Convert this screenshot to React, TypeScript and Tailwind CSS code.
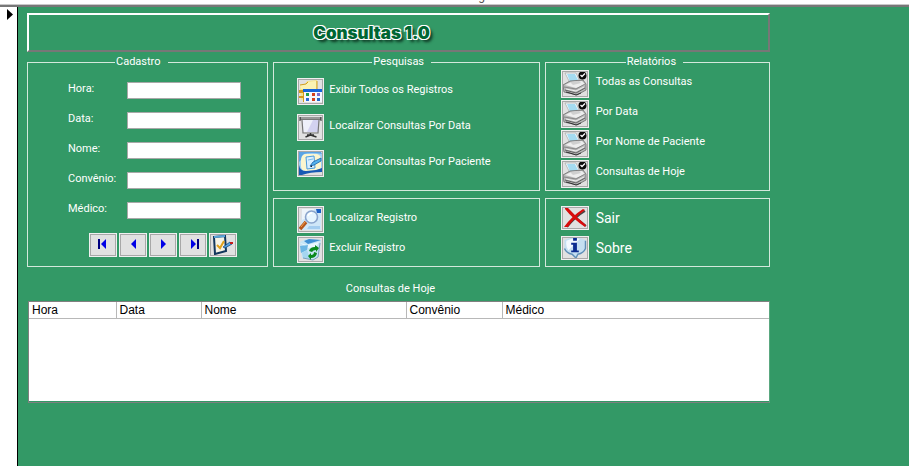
import type { ReactNode } from 'react';

const face =
  'flex shrink-0 items-center justify-center overflow-hidden border border-[#f0f0f0] bg-[#e1e1e1] p-px shadow-[inset_0_0_0_1px_#a8a8a8]';

const sizes = {
  square: 'h-[27px] w-[27px]',
  print: 'h-[28px] w-[28px]',
  wide: 'h-[24px] w-[28px]',
};

function FolderIcon() {
  return (
    <svg viewBox="0 0 23 23" className="h-full w-full" aria-hidden="true">
      <path d="M1 5l5-1 2-3 10-1v10l-12 9-4 1z" fill="#f4e48a" />
      <path d="M1 5l6-1 2-2 8-1v8H2z" fill="#fbf3b4" />
      <path d="M18 1v8M1 5l6-1 2-2" stroke="#cf9d22" fill="none" />
      <path d="M0 10h5v3H0zM0 16h4v2H0z" fill="#d39a1e" />
      <rect x="4" y="9" width="19" height="13" fill="#f4f7ff" />
      <path d="M4 9h19v3H4z" fill="#1464dc" />
      <path d="M4.500 12v10" stroke="#d39a1e" />
      <path d="M7 13h3v3H7z" fill="#22a04a" />
      <path d="M13 13h3v3h-3z" fill="#d2401e" />
      <path d="M18 13h3v3h-3z" fill="#7a6ad0" />
      <path d="M7 18h3v3H7z" fill="#2a6ad8" />
      <path d="M13 18h3v3h-3z" fill="#d2401e" />
      <path d="M18 18h3v3h-3z" fill="#2268c8" />
    </svg>
  );
}

function ScreenIcon() {
  return (
    <svg viewBox="0 0 23 23" className="h-full w-full" aria-hidden="true">
      <path d="M3 4h17v12H3z" fill="#eef0fa" />
      <path d="M14 4h6v12H8z" fill="#d3d2f0" />
      <path d="M3 4l1 13h15l1-13" fill="none" stroke="#777" strokeWidth="1.200" />
      <path d="M1 1h21v3H1z" fill="#777" />
      <path d="M2 2h19" stroke="#bbb" />
      <path d="M1 1v4M22 1v4" stroke="#333" />
      <path d="M11.500 17v2l-5 2M11.500 19l6 2M8 19h7" fill="none" stroke="#333" strokeWidth="1.500" />
    </svg>
  );
}

function PatientIcon() {
  return (
    <svg viewBox="0 0 23 23" className="h-full w-full" aria-hidden="true">
      <path d="M0 2q11-4 23 0v17q-12 0-21 3L0 22z" fill="#9fd0f4" />
      <path d="M2 6q1-4 5-4h11q4 1 4 5v8q0 4-5 4H7q-5 0-5-5z" fill="#fbf6cf" />
      <path d="M0 0h22l1 2Q12 0 5 2 2 4 2 8L0 10z" fill="#5aa4e4" />
      <path d="M0 13q1 6 7 6l10-1 6-2v4q-12 0-20 3H0z" fill="#1759b4" />
      <path d="M7 5l8-1 1 12-8 1z" fill="#d8efff" stroke="#4a9cdc" />
      <path d="M9 8l5-1" stroke="#7fbde8" />
      <path d="M22 6l-8 4-3 4 4-1 7-4z" fill="#55b4ee" stroke="#165fa8" strokeWidth=".8" />
      <path d="M11 15l2-2v2z" fill="#112233" />
    </svg>
  );
}

function PrinterIcon() {
  return (
    <svg viewBox="0 0 24 24" className="h-full w-full" aria-hidden="true">
      <path d="M2 1h11l4 9-10 1z" fill="#f4fcff" stroke="#999" strokeWidth=".6" />
      <path d="M4 2h8l3 6-8 2z" fill="#a5dcf2" />
      <path d="M0 13l7-4 13-1 3 4v6l-9 5-13-3z" fill="#b9b9b9" stroke="#6a6a6a" strokeWidth=".8" />
      <path d="M2 13l6-3 11-1 3 3-9 4z" fill="#ededed" />
      <path d="M7 10l9-1 2 2-8 2z" fill="#cfcfcf" />
      <path d="M1 15l12 2 9-5" fill="none" stroke="#7a7a7a" strokeWidth=".8" />
      <path d="M3 17l10 2 8-4" fill="none" stroke="#f0f0f0" />
      <path d="M2 18l11 3 9-5" fill="none" stroke="#4a4a4a" strokeWidth=".8" />
      <path d="M3 20l4 1 6 2 5-2" fill="none" stroke="#333" />
      <circle cx="19.500" cy="3.500" r="4" fill="#0a0a0a" />
      <path d="M17.500 3l1.500 1.500 3-3" fill="none" stroke="#fff" strokeWidth="1.300" />
    </svg>
  );
}

function SearchIcon() {
  return (
    <svg viewBox="0 0 23 23" className="h-full w-full" aria-hidden="true">
      <path d="M3 1h19v21H2z" fill="#cfe6f8" />
      <path d="M3 1h12v5L3 12z" fill="#eef5fb" />
      <path d="M10 18h11v3H8z" fill="#a4cdf0" />
      <path d="M17 1h5v4h-4z" fill="#1a5fc4" />
      <path d="M1 21l6-7" stroke="#b5561c" strokeWidth="3.500" />
      <path d="M2 19l4-5" stroke="#f0a04c" />
      <circle cx="12.500" cy="9" r="6" fill="#e6f5ff" stroke="#8aa4cc" strokeWidth="1.600" />
      <path d="M9 8q1-3 4-3" fill="none" stroke="#fff" strokeWidth="1.500" />
    </svg>
  );
}

function RecycleIcon() {
  return (
    <svg viewBox="0 0 23 23" className="h-full w-full" aria-hidden="true">
      <path d="M1 4l6-3 15 1-2 17-6 3-11-2z" fill="#c6e5f6" />
      <path d="M5 3l4 3 13-4-12-1z" fill="#3f8fd4" />
      <path d="M1 5l7 2 12-3-3 5-8 1z" fill="#eaf7ff" />
      <path d="M1 8l8-1-1 5-6 3z" fill="#6cb6e4" />
      <path d="M3 15l5-3 3 9-7-1z" fill="#a5d6f0" />
      <path d="M21 5l-2 14-5 3-10-2" fill="none" stroke="#7aa0bc" />
      <path d="M10 13q1-4 6-4V7l4 3-3 4v-2q-3 0-4 2zM18 15q-1 5-6 5v2l-3-4 3-3v2q3 0 3-3z" fill="#0a8a1e" />
    </svg>
  );
}

function CloseIcon() {
  return (
    <svg viewBox="0 0 24 20" className="h-full w-full" aria-hidden="true">
      <path d="M4 1q9 10 19 17M22 3Q12 9 4 19" fill="none" stroke="#444" strokeWidth="2" />
      <path d="M2 0l3 0q8 9 18 17l-1 2Q9 10 2 1z" fill="#d80c0c" />
      <path d="M20 1l2 1Q11 10 5 19H1Q9 8 20 1z" fill="#d80c0c" />
    </svg>
  );
}

function InfoIcon() {
  return (
    <svg viewBox="0 0 24 21" className="h-full w-full" aria-hidden="true">
      <path d="M1 2Q12-3 23 2v9q-2 5-8 6l-2 4-4-4q-7-2-8-6z" fill="#c5dff2" />
      <path d="M3 3q8-4 14-2L5 13q-3-4-2-10z" fill="#f2f9ff" />
      <path d="M23 3v8q-2 5-8 6l-2 4-4-4q-6-1-8-6" fill="none" stroke="#5f8fb8" strokeWidth="1.500" />
      <path d="M10 0h4v3h-4zM8 5h6v8h2v2H8v-2h2V7H8z" fill="#0c2c90" />
    </svg>
  );
}

function EditIcon() {
  return (
    <svg viewBox="0 0 24 20" className="h-full w-full" aria-hidden="true">
      <path d="M3 2l11-1 1 15-11 3z" fill="#f6f3e6" stroke="#12365c" strokeWidth="2" />
      <path d="M3 2l11-1" stroke="#5aa6dc" strokeWidth="2" />
      <path d="M6 10l3 3 4-7" fill="none" stroke="#e0a11c" strokeWidth="2" />
      <path d="M12 12l7-5 2 2-7 4z" fill="#5aa6e4" stroke="#174a80" strokeWidth=".8" />
      <path d="M19 7h3v2h-3z" fill="#c41c1c" />
    </svg>
  );
}

function NavIcon({ back, edge }: { back?: boolean; edge?: boolean }) {
  return (
    <svg viewBox="0 0 24 20" className="h-full w-full" aria-hidden="true">
      {back ? <path d="M15 4v10l-5-5z" fill="#0000e6" /> : <path d="M10 4v10l5-5z" fill="#0000e6" />}
      {edge && <path d={back ? 'M7 4h2v10H7z' : 'M16 4h2v10h-2z'} fill="#000080" />}
    </svg>
  );
}

type ActionProps = {
  id: string;
  text: string;
  size: keyof typeof sizes;
  icon: ReactNode;
  large?: boolean;
};

function Action({ id, text, size, icon, large }: ActionProps) {
  return (
    <div className={`flex items-center ${size === 'square' ? 'gap-[5px]' : 'gap-[7px]'}`}>
      <button id={id} type="button" className={`${face} ${sizes[size]}`}>
        {icon}
      </button>
      <label htmlFor={id} className={large ? 'text-[14px] leading-4' : 'pb-1'}>
        {text}
      </label>
    </div>
  );
}

function Group({ title, indent, body, children }: { title: string; indent: string; body: string; children: ReactNode }) {
  return (
    <fieldset className="min-w-0 border border-[#d4e8dc]">
      <legend className={`h-[14px] pr-[7px] pl-px ${indent}`}>{title}</legend>
      <div className={`flex flex-col ${body}`}>{children}</div>
    </fieldset>
  );
}

const fields = [
  ['hora', 'Hora:'],
  ['data', 'Data:'],
  ['nome', 'Nome:'],
  ['convenio', 'Convênio:'],
  ['medico', 'Médico:'],
];

const reports = [
  ['todas', 'Todas as Consultas'],
  ['por-data', 'Por Data'],
  ['por-nome', 'Por Nome de Paciente'],
  ['hoje', 'Consultas de Hoje'],
];

const navigation = [
  { label: 'Primeiro registro', icon: <NavIcon back edge /> },
  { label: 'Registro anterior', icon: <NavIcon back /> },
  { label: 'Próximo registro', icon: <NavIcon /> },
  { label: 'Último registro', icon: <NavIcon edge /> },
  { label: 'Editar registro', icon: <EditIcon /> },
];

export default function App() {
  return (
    <div className="flex min-h-screen flex-col bg-[#339966] font-['Roboto','Liberation_Sans',sans-serif] text-[11px] leading-[14px] text-white">
      <div className="h-[7px] border-b-2 border-[#777777] bg-white">
        <div className="flex h-[5px] items-end justify-center overflow-hidden border-b border-[#c8c8c8] pl-[54px] text-[12px] leading-4 text-[#555555]">
          <span>g</span>
        </div>
      </div>
      <div className="flex flex-1">
        <div className="w-[18px] shrink-0 border-r border-black bg-white pt-[2px] pl-[7px]">
          <svg viewBox="0 0 6 11" className="h-[11px] w-[6px]" aria-hidden="true">
            <path d="M0 0l6 5.500-6 5.500z" fill="#000" />
          </svg>
        </div>
        <main className="min-w-0 flex-1 px-[9px] pt-[6px]">
          <div className="w-full max-w-[743px]">
            <header className="flex h-[39px] items-center justify-center border-2 border-t-white border-r-[#777777] border-b-[#777777] border-l-white pr-[54px]">
              <h1 className="font-['Inter',sans-serif] text-[17px] leading-5 font-black text-[#006633] [text-shadow:-1px_-1px_0_#fff,1px_-1px_0_#fff,-1px_1px_0_#fff,1px_1px_0_#fff,3px_3px_3px_#0b3320]">
                Consultas 1.0
              </h1>
            </header>

            <div className="mt-[3px] grid grid-cols-[241fr_266fr_225fr] gap-x-[5px]">
              <Group title="Cadastro" indent="ml-[87px]" body="pt-[13px] pb-[9px] pl-[40px]">
                <div className="flex flex-col gap-[13px]">
                  {fields.map(([id, text]) => (
                    <div key={id} className="flex h-[17px] items-center">
                      <label htmlFor={id} className="w-[59px] pb-1">
                        {text}
                      </label>
                      <input
                        id={id}
                        type="text"
                        className="h-[17px] w-[114px] border border-[#a8a8a8] bg-white px-1 text-black"
                      />
                    </div>
                  ))}
                </div>
                <div className="mt-[14px] flex gap-[2px] pl-[21px]">
                  {navigation.map(({ label, icon }) => (
                    <button key={label} type="button" aria-label={label} className={`${face} ${sizes.wide}`}>
                      {icon}
                    </button>
                  ))}
                </div>
              </Group>

              <div className="flex flex-col gap-[7px]">
                <Group title="Pesquisas" indent="ml-[98px]" body="gap-[9px] pt-[9px] pb-[13px] pl-[23px]">
                  <Action id="exibir" text="Exibir Todos os Registros" size="square" icon={<FolderIcon />} />
                  <Action id="localizar-data" text="Localizar Consultas Por Data" size="square" icon={<ScreenIcon />} />
                  <Action
                    id="localizar-paciente"
                    text="Localizar Consultas Por Paciente"
                    size="square"
                    icon={<PatientIcon />}
                  />
                </Group>
                <section className="flex flex-col gap-[3px] border border-[#d4e8dc] pt-[7px] pb-[3px] pl-[23px]">
                  <Action id="localizar" text="Localizar Registro" size="square" icon={<SearchIcon />} />
                  <Action id="excluir" text="Excluir Registro" size="square" icon={<RecycleIcon />} />
                </section>
              </div>

              <div className="flex flex-col gap-[7px]">
                <Group title="Relatórios" indent="ml-[80px]" body="gap-[2px] pt-px pb-[2px] pl-[15px]">
                  {reports.map(([id, text]) => (
                    <Action key={id} id={id} text={text} size="print" icon={<PrinterIcon />} />
                  ))}
                </Group>
                <section className="flex flex-1 flex-col gap-[6px] border border-[#d4e8dc] pt-[7px] pl-[15px]">
                  <Action id="sair" text="Sair" size="wide" icon={<CloseIcon />} large />
                  <Action id="sobre" text="Sobre" size="wide" icon={<InfoIcon />} large />
                </section>
              </div>
            </div>

            <h2 id="lista" className="mt-[15px] pr-4 text-center">
              Consultas de Hoje
            </h2>
            <div className="mt-[5px] ml-px border border-[#808080] border-r-[#5aa880] pb-px">
              <div className="min-h-[99px] bg-white">
                <table
                  aria-labelledby="lista"
                  className="w-full table-fixed border-collapse text-left font-['Liberation_Sans',Arial,sans-serif] text-[12px] text-black"
                >
                  <thead>
                    <tr className="h-[16px] border-b border-[#b8b8b8] [&>th]:border-r [&>th]:border-[#b8b8b8] [&>th]:p-0 [&>th]:pl-[3px] [&>th]:font-normal [&>th:last-child]:border-r-0">
                      <th className="w-[87px]">Hora</th>
                      <th className="w-[85px]">Data</th>
                      <th className="w-[205px]">Nome</th>
                      <th className="w-[96px]">Convênio</th>
                      <th>Médico</th>
                    </tr>
                  </thead>
                  <tbody />
                </table>
              </div>
            </div>
          </div>
        </main>
      </div>
    </div>
  );
}
